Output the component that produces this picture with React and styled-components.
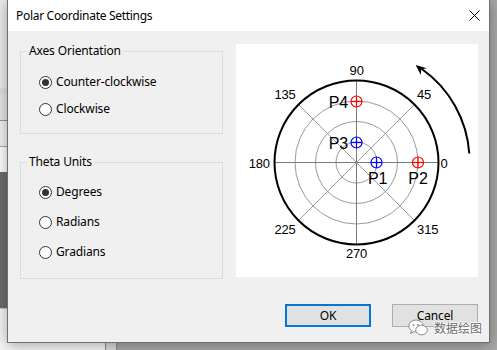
import styled, { createGlobalStyle } from "styled-components"

const GlobalStyle = createGlobalStyle`
    html, body {
        margin: 0;
        padding: 0;
        overflow: hidden;
    }
    body {
        font-family: "Noto Sans", "Liberation Sans", sans-serif;
        font-size: 12px;
        letter-spacing: -0.15px;
        color: #000;
    }
`

const bands = [
    { h: 88, bg: "#eeeeee" },
    { h: 7, bg: "#e2e2e2" },
    { h: 26, bg: "#e8e8e8", line: "#9a9a9a" },
    { h: 26, bg: "#f3f3f3", line: "#ababab" },
    { h: 25, bg: "#ffffff" },
    { h: 136, bg: "#6e6e6e" },
    { h: 42, bg: "#f7f7f7", line: "#c8c8c8", top: true },
]

const AXES = ["Counter-clockwise", "Clockwise"]
const UNITS = ["Degrees", "Radians", "Gradians"]

const C = { x: 120.5, y: 118.5 }
const R = 82
const RINGS = [20.5, 41, 61.5]

const angleLabels = [
    { t: "90", x: 120.7, y: 26 },
    { t: "45", x: 188, y: 50 },
    { t: "135", x: 49, y: 50 },
    { t: "180", x: 23.3, y: 119 },
    { t: "0", x: 208, y: 119 },
    { t: "225", x: 49, y: 185.5 },
    { t: "315", x: 191.7, y: 185.5 },
    { t: "270", x: 120.5, y: 209.5 },
]

const points = [
    { name: "P1", x: 140.5, y: 118.5, color: "#0000ff", lx: 141.7, ly: 134, anchor: "middle" },
    { name: "P2", x: 182, y: 118.5, color: "#ff0000", lx: 182, ly: 134, anchor: "middle" },
    { name: "P3", x: 120.5, y: 98.5, color: "#0000ff", lx: 112, ly: 99.5, anchor: "end" },
    { name: "P4", x: 120.5, y: 57.5, color: "#ff0000", lx: 112, ly: 58.5, anchor: "end" },
]

const PolarChart = () => {
    const spokes = [0, 45, 90, 135].map((a) => {
        const r = (a * Math.PI) / 180
        return {
            x1: C.x + R * Math.cos(r),
            y1: C.y - R * Math.sin(r),
            x2: C.x - R * Math.cos(r),
            y2: C.y + R * Math.sin(r),
            stroke: a % 90 === 0 ? "#7a7a7a" : "#9a9a9a",
        }
    })

    return (
        <svg width="242" height="233" viewBox="0 0 242 233">
            <rect width="242" height="233" fill="#fff" />
            {RINGS.map((r) => (
                <circle key={r} cx={C.x} cy={C.y} r={r} fill="none" stroke="#9a9a9a" strokeWidth="1" />
            ))}
            {spokes.map((s, i) => (
                <line key={i} {...s} strokeWidth="1" />
            ))}
            <circle cx={C.x} cy={C.y} r={R} fill="none" stroke="#000" strokeWidth="2" />

            <g fontFamily="'Liberation Sans', Arial, sans-serif" fontSize="13" fill="#000" textAnchor="middle" dominantBaseline="central">
                {angleLabels.map((l) => (
                    <text key={l.t} x={l.x} y={l.y}>{l.t}</text>
                ))}
            </g>

            {points.map((p) => (
                <g key={p.name}>
                    <circle cx={p.x} cy={p.y} r="5.5" fill="none" stroke={p.color} strokeWidth="1.2" />
                    <line x1={p.x - 5.5} y1={p.y} x2={p.x + 5.5} y2={p.y} stroke={p.color} strokeWidth="1.2" />
                    <line x1={p.x} y1={p.y - 5.5} x2={p.x} y2={p.y + 5.5} stroke={p.color} strokeWidth="1.2" />
                    <text
                        x={p.lx}
                        y={p.ly}
                        fontFamily="'Liberation Sans', Arial, sans-serif"
                        fontSize="16"
                        textAnchor={p.anchor}
                        dominantBaseline="central"
                    >
                        {p.name}
                    </text>
                </g>
            ))}

            <path d="M 233.3 109.5 A 113 113 0 0 0 185.5 24.8" fill="none" stroke="#000" strokeWidth="2" />
            <polygon points="179.7,21 190.7,24.3 185.3,25.2 184.7,31" fill="#000" />
        </svg>
    )
}

const Radio = ({ label, checked }) => (
    <RadioRow>
        <RadioCircle $checked={checked} />
        <span>{label}</span>
    </RadioRow>
)

const App = () => {
    return (
        <>
            <GlobalStyle />
            <Screen>
                <Backdrop>
                    <LeftPane>
                        {bands.map((b, i) => (
                            <Band key={i} $h={b.h} $bg={b.bg} $line={b.line} $top={b.top} />
                        ))}
                    </LeftPane>
                    <Splitter />
                    <Workspace />
                </Backdrop>

                <Dialog>
                    <TitleBar>
                        <Title>Polar Coordinate Settings</Title>
                        <CloseButton>
                            <svg width="11" height="11" viewBox="0 0 11 11">
                                <path d="M0.5 0.5 L10.5 10.5 M10.5 0.5 L0.5 10.5" stroke="#000" strokeWidth="1" />
                            </svg>
                        </CloseButton>
                    </TitleBar>

                    <Body>
                        <Content>
                            <Options>
                                <Group $height={83}>
                                    <Legend>Axes Orientation</Legend>
                                    <RadioList $top={15} $gap={11}>
                                        {AXES.map((a, i) => (
                                            <Radio key={a} label={a} checked={i === 0} />
                                        ))}
                                    </RadioList>
                                </Group>
                                <Group $height={117}>
                                    <Legend>Theta Units</Legend>
                                    <RadioList $top={14} $gap={14}>
                                        {UNITS.map((u, i) => (
                                            <Radio key={u} label={u} checked={i === 0} />
                                        ))}
                                    </RadioList>
                                </Group>
                            </Options>
                            <ChartPanel>
                                <PolarChart />
                            </ChartPanel>
                        </Content>

                        <ButtonRow>
                            <Button $primary>OK</Button>
                            <Button>Cancel</Button>
                        </ButtonRow>
                    </Body>

                    <Watermark>
                        <svg width="20" height="17" viewBox="0 0 20 17">
                            <ellipse cx="8" cy="7" rx="7.2" ry="6" fill="#fff" stroke="#8a8a8a" strokeWidth="1" />
                            <path d="M3.5 11.5 L2.5 14.5 L6.5 12.5" fill="#fff" stroke="#8a8a8a" strokeWidth="1" />
                            <ellipse cx="13.5" cy="11" rx="5.8" ry="4.8" fill="#fff" stroke="#8a8a8a" strokeWidth="1" />
                            <circle cx="5.5" cy="6" r="0.9" fill="#8a8a8a" />
                            <circle cx="10" cy="6" r="0.9" fill="#8a8a8a" />
                        </svg>
                        <WatermarkText>数据绘图</WatermarkText>
                    </Watermark>
                </Dialog>
            </Screen>
        </>
    )
}

const Screen = styled.div`
    position: relative;
    width: 497px;
    height: 350px;
    overflow: hidden;
`

const Backdrop = styled.div`
    display: flex;
    height: 100%;
`

const LeftPane = styled.div`
    width: 105px;
    display: flex;
    flex-direction: column;
    background: #f7f7f7;
`

const Band = styled.div`
    height: ${({ $h }) => $h}px;
    flex: none;
    background: ${({ $bg }) => $bg};
    ${({ $line, $top }) => $line && ($top ? `border-top: 1px solid ${$line};` : `border-bottom: 1px solid ${$line};`)}
    box-sizing: border-box;
`

const Splitter = styled.div`
    width: 12px;
    border-left: 1px solid #8c8c8c;
    border-right: 1px solid #8c8c8c;
    background: #dcdcdc;
    box-sizing: border-box;
`

const Workspace = styled.div`
    flex: 1;
    background: #a9a9a9;
`

const Dialog = styled.div`
    position: absolute;
    left: 7px;
    top: -1px;
    width: 483px;
    height: 344px;
    box-sizing: border-box;
    border: 1px solid #6f6f6f;
    background: #f0f0f0;
    box-shadow: 0 2px 14px rgba(0, 0, 0, 0.35);
    display: flex;
    flex-direction: column;
`

const TitleBar = styled.div`
    height: 31px;
    flex: none;
    background: #fff;
    display: flex;
    align-items: center;
    justify-content: space-between;
    padding: 0 9px 0 8px;
`

const Title = styled.div`
    font-size: 12px;
    letter-spacing: -0.3px;
    margin-top: -1px;
`

const CloseButton = styled.div`
    display: flex;
    width: 11px;
    height: 11px;
    margin-top: -1px;
`

const Body = styled.div`
    flex: 1;
    display: flex;
    flex-direction: column;
    padding: 13px 10px 15px 12px;
`

const Content = styled.div`
    display: flex;
    gap: 13px;
`

const Options = styled.div`
    width: 203px;
    padding-top: 7px;
    display: flex;
    flex-direction: column;
    gap: 28px;
`

const Group = styled.div`
    height: ${({ $height }) => $height}px;
    box-sizing: border-box;
    border: 1px solid #dcdcdc;
    padding-left: 18px;
`

const Legend = styled.div`
    width: fit-content;
    margin: -9px 0 0 -12px;
    padding: 0 2px;
    line-height: 16px;
    background: #f0f0f0;
`

const RadioList = styled.div`
    display: flex;
    flex-direction: column;
    margin-top: ${({ $top }) => $top}px;
    gap: ${({ $gap }) => $gap}px;
`

const RadioRow = styled.div`
    display: flex;
    align-items: center;
    gap: 4px;
    height: 16px;
    line-height: 16px;
`

const RadioCircle = styled.span`
    width: 13px;
    height: 13px;
    box-sizing: border-box;
    border-radius: 50%;
    border: 1px solid #333;
    background: #fff;
    display: flex;
    align-items: center;
    justify-content: center;

    &::after {
        content: "";
        display: ${({ $checked }) => ($checked ? "block" : "none")};
        width: 7px;
        height: 7px;
        border-radius: 50%;
        background: #333;
    }
`

const ChartPanel = styled.div`
    width: 242px;
    height: 233px;
    display: flex;
`

const ButtonRow = styled.div`
    margin-top: auto;
    display: flex;
    justify-content: flex-end;
    gap: 21px;
    padding-right: 1px;
`

const Button = styled.div`
    width: 86px;
    height: 23px;
    box-sizing: border-box;
    background: #e1e1e1;
    border: ${({ $primary }) => ($primary ? "2px solid #0078d7" : "1px solid #adadad")};
    display: flex;
    align-items: center;
    justify-content: center;
    font-size: 12px;
`

const Watermark = styled.div`
    position: absolute;
    left: 400px;
    top: 319px;
    display: flex;
    align-items: center;
    gap: 6px;
`

const WatermarkText = styled.span`
    font-family: "Noto Sans CJK SC", sans-serif;
    font-size: 12px;
    letter-spacing: 0;
    color: #6a6a6a;
    text-shadow: 1px 0 0 #fff, -1px 0 0 #fff, 0 1px 0 #fff, 0 -1px 0 #fff;
`

export default App
